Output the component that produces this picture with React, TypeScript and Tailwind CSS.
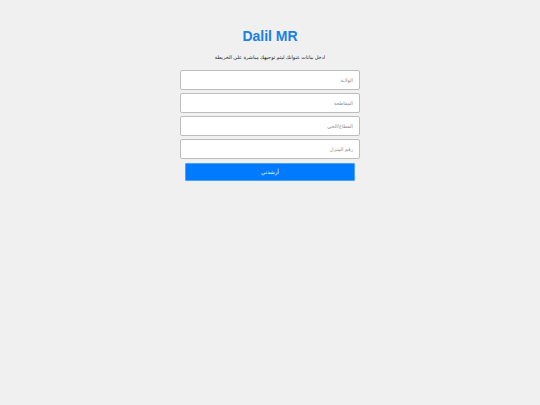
export default function App() {
  const fields = ['الولاية', 'المقاطعة', 'القطاع/الحي', 'رقم المنزل'];

  return (
    <div
      className="min-h-screen w-full bg-[#f0f0f0] flex flex-col items-center pt-[28px]"
      style={{ fontFamily: '"Liberation Sans", "DejaVu Sans", Arial, sans-serif' }}
    >
      <h1 className="text-[14px] leading-[16px] font-bold text-[#1a7fe6]">Dalil MR</h1>
      <p dir="rtl" className="mt-[9px] text-[5px] leading-[8px] text-[#222]">
        ادخل بيانات عنوانك ليتم توجيهك مباشرة على الخريطة
      </p>

      <form dir="rtl" className="mt-[9px] w-[180px] flex flex-col items-center gap-[3px]">
        {fields.map((f) => (
          <input
            key={f}
            type="text"
            placeholder={f}
            className="w-full h-[20px] px-[6px] text-[5px] bg-white border border-[#bdbdbd] rounded-[2px] placeholder:text-[#8a8a8a] outline-none"
          />
        ))}
        <button
          type="button"
          className="mt-[1px] w-[170px] h-[18px] bg-[#007bff] border border-[#4aa0ff] rounded-[1px] text-white text-[5.5px]"
        >
          أرشدني
        </button>
      </form>
    </div>
  );
}
